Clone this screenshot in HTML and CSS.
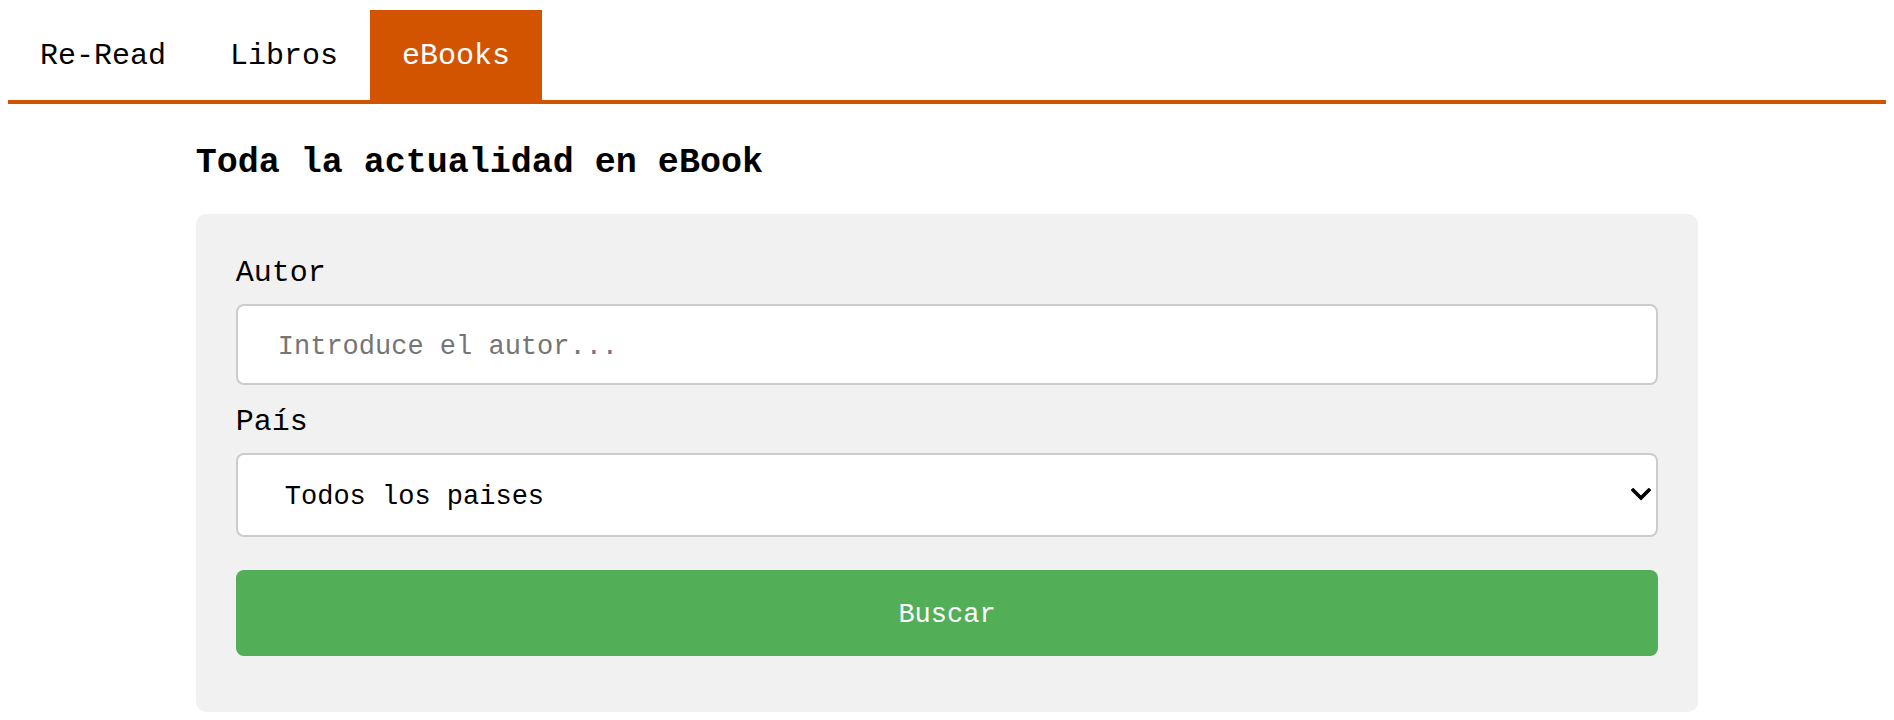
FILE: index.html
```html
<!DOCTYPE html>
<html lang="es">
<head>
<meta charset="utf-8">
<title>eBooks</title>
<link rel="stylesheet" href="styles.css">
</head>
<body>
<nav class="tabs">
  <a class="tab" href="#">Re-Read</a>
  <a class="tab" href="#">Libros</a>
  <a class="tab active" href="#">eBooks</a>
</nav>
<main class="main">
  <h2 class="title">Toda la actualidad en eBook</h2>
  <form class="card">
    <label class="label" for="autor">Autor</label>
    <input class="field input" id="autor" type="text" placeholder="Introduce el autor...">
    <label class="label" for="pais">País</label>
    <div class="select-wrap">
      <select class="field select" id="pais">
        <option>Todos los paises</option>
      </select>
      <svg class="chevron" width="20" height="13" viewBox="0 0 20 13" aria-hidden="true">
        <polyline points="2.2,2.2 10,10 17.8,2.2" fill="none" stroke="#000" stroke-width="3.6" stroke-linecap="square"/>
      </svg>
    </div>
    <button class="btn" type="button">Buscar</button>
  </form>
</main>
</body>
</html>
```
FILE: styles.css
```css
* {
  box-sizing: border-box;
}

body {
  margin: 8px;
  background: #ffffff;
  color: #000000;
  font-family: "Liberation Mono", "Courier New", monospace;
}

.tabs {
  display: flex;
  margin-top: 2px;
  border-bottom: 4px solid #d35400;
}

.tab {
  display: block;
  padding: 2px 32px 0;
  height: 90px;
  line-height: 88px;
  font-size: 30px;
  color: #000000;
  text-decoration: none;
}

.tab.active {
  background: #d35400;
  color: #ffffff;
}

.main {
  width: 80%;
  margin: 0 auto;
}

.title {
  margin: 39px 0 31px;
  font-size: 35px;
  line-height: 40px;
  font-weight: bold;
}

.card {
  display: flex;
  flex-direction: column;
  background: #f1f1f1;
  border-radius: 10px;
  padding: 40px 40px 56px;
}

.label {
  display: block;
  font-size: 30px;
  line-height: 34px;
  padding-top: 2px;
  margin-bottom: 14px;
}

.field {
  width: 100%;
  border: 2px solid #cccccc;
  border-radius: 8px;
  background: #ffffff;
  font-family: "Liberation Mono", "Courier New", monospace;
  font-size: 27px;
  color: #000000;
  outline: none;
}

.input {
  height: 81px;
  padding: 4px 38px 0 40px;
  margin-bottom: 18px;
}

.input::placeholder {
  color: #757575;
}

.select-wrap {
  position: relative;
  margin-bottom: 33px;
}

.select {
  display: block;
  height: 84px;
  padding: 4px 40px 0 47px;
  appearance: none;
  -webkit-appearance: none;
}

.chevron {
  position: absolute;
  right: 7px;
  top: 35px;
  pointer-events: none;
}

.btn {
  height: 86px;
  width: 100%;
  border: none;
  border-radius: 8px;
  padding-top: 4px;
  background: #52ae57;
  color: #ffffff;
  font-family: "Liberation Mono", "Courier New", monospace;
  font-size: 27px;
}
```
